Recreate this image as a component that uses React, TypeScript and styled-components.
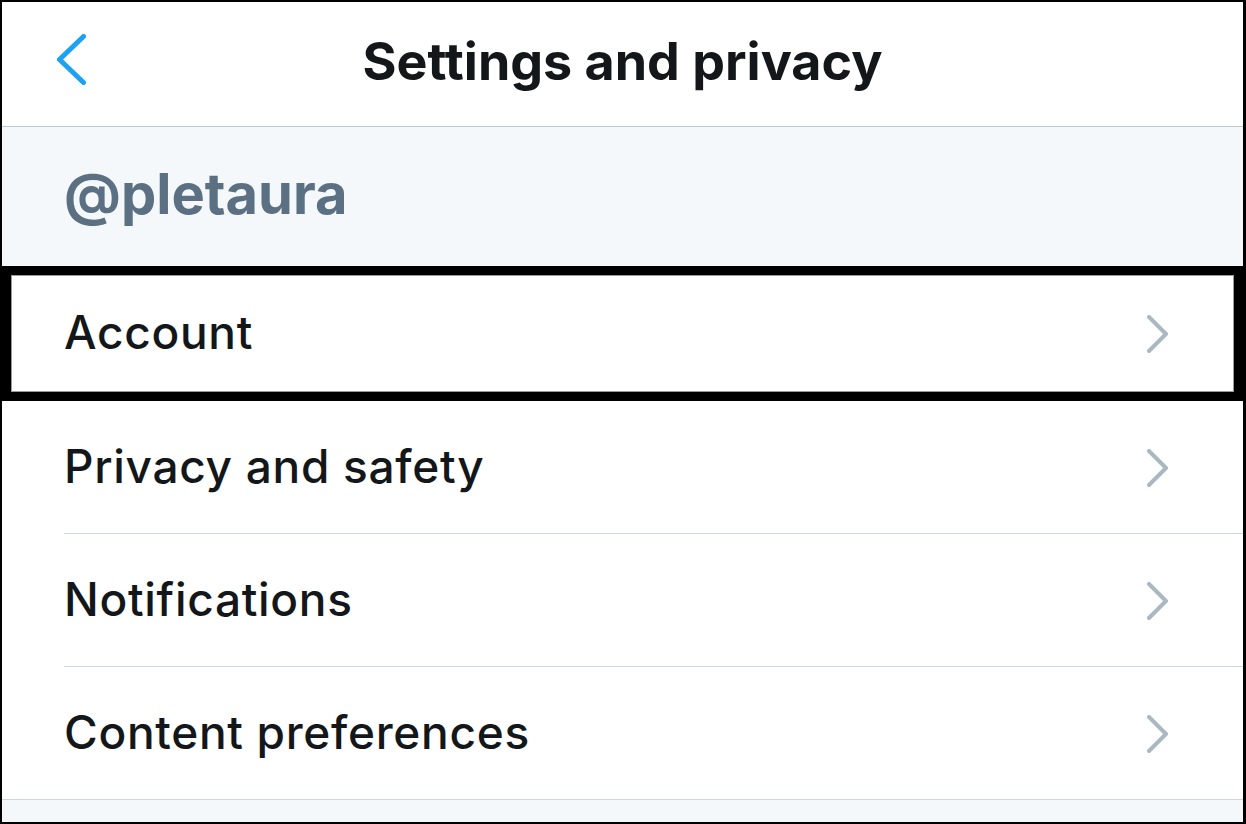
import styled, { createGlobalStyle } from "styled-components";

const items = [
  { label: "Account", highlighted: true },
  { label: "Privacy and safety" },
  { label: "Notifications" },
  { label: "Content preferences", last: true },
];

export default function App() {
  return (
    <>
      <GlobalStyle />
      <Frame>
        <Header>
          <BackButton aria-label='Back'>
            <svg width='29' height='51' viewBox='0 0 29 51'>
              <polyline
                points='26.5,2.5 2.5,25.5 26.5,48.5'
                fill='none'
                stroke='#1da1f2'
                strokeWidth='5'
                strokeLinecap='round'
                strokeLinejoin='round'
              />
            </svg>
          </BackButton>
          <Title>Settings and privacy</Title>
        </Header>
        <SectionHeader>@pletaura</SectionHeader>
        <List>
          {items.map(({ label, highlighted, last }) => (
            <Row key={label} $last={last} $highlighted={highlighted}>
              <RowText>{label}</RowText>
              <svg width='22' height='38' viewBox='0 0 22 38'>
                <polyline
                  points='2,2 19,19 2,36'
                  fill='none'
                  stroke='#aab8c2'
                  strokeWidth='4'
                  strokeLinecap='round'
                  strokeLinejoin='round'
                />
              </svg>
              {highlighted && <Highlight />}
            </Row>
          ))}
        </List>
      </Frame>
    </>
  );
}

const GlobalStyle = createGlobalStyle`
  * {
    box-sizing: border-box;
  }

  body {
    margin: 0;
    font-family: Inter, "Noto Sans", sans-serif;
  }
`;

const Frame = styled.div`
  display: flex;
  flex-direction: column;
  width: 1246px;
  height: 824px;
  border: 2px solid #000;
  border-right-width: 3px;
  background: #f5f8fa;
  overflow: hidden;
`;

const Header = styled.header`
  position: relative;
  display: flex;
  align-items: center;
  justify-content: center;
  height: 125px;
  background: #fff;
  border-bottom: 1px solid #bdc9d1;
`;

const BackButton = styled.button`
  position: absolute;
  left: 55px;
  top: 32px;
  display: flex;
  padding: 0;
  border: none;
  background: none;
`;

const Title = styled.h1`
  margin: 0 0 6px;
  font-size: 52px;
  font-weight: 700;
  color: #14171a;
`;

const SectionHeader = styled.div`
  display: flex;
  align-items: center;
  height: 139px;
  padding: 0 0 5px 62px;
  font-size: 56px;
  font-weight: 700;
  color: #5b7083;
`;

const List = styled.ul`
  margin: 0;
  padding: 0;
  list-style: none;
`;

const Row = styled.li<{ $last?: boolean; $highlighted?: boolean }>`
  position: relative;
  display: flex;
  align-items: center;
  justify-content: space-between;
  height: ${({ $highlighted }) => ($highlighted ? "135px" : "133px")};
  padding: 0 74px 0 62px;
  background: #fff;

  &::after {
    content: "";
    position: absolute;
    bottom: 0;
    left: ${({ $last }) => ($last ? "0" : "62px")};
    right: 0;
    height: 1px;
    background: #ccd6dd;
  }
`;

const RowText = styled.span`
  margin-bottom: 4px;
  font-size: 46px;
  font-weight: 500;
  letter-spacing: 0.7px;
  color: #14171a;
`;

const Highlight = styled.div`
  position: absolute;
  inset: 0;
  z-index: 1;
  border: 9px solid #000;
  box-shadow: inset 0 0 0 1px #9a9a9a;
`;
